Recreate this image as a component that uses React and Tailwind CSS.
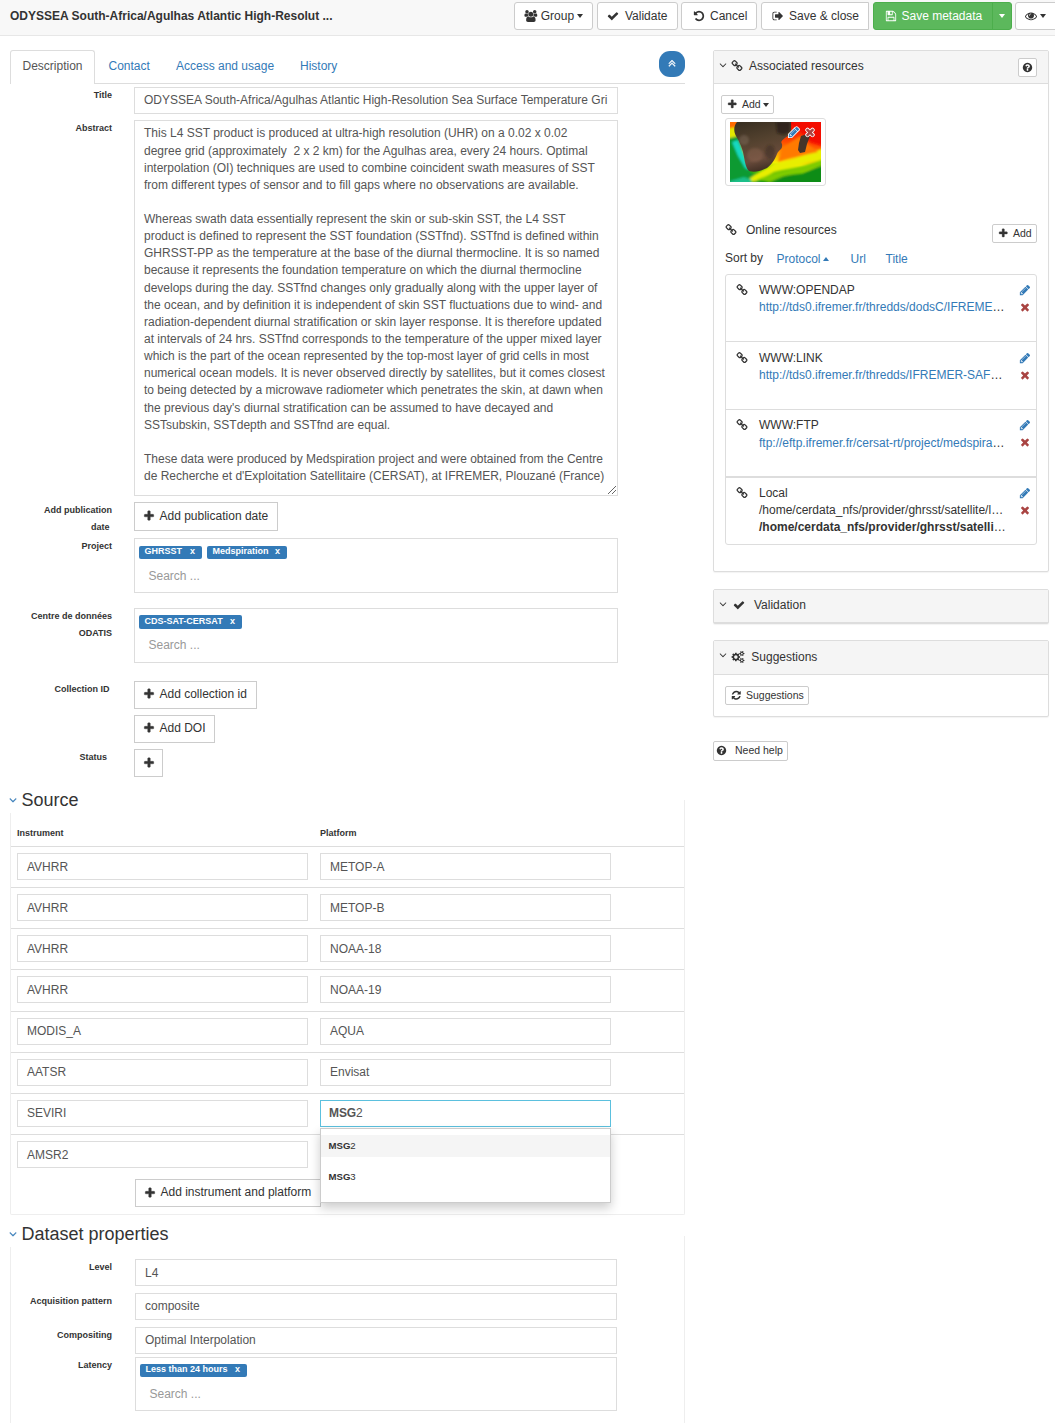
import React from "react";

const PATHS = {
  plus: "M1600 736v192q0 40-28 68t-68 28h-416v416q0 40-28 68t-68 28h-192q-40 0-68-28t-28-68v-416h-416q-40 0-68-28t-28-68v-192q0-40 28-68t68-28h416v-416q0-40 28-68t68-28h192q40 0 68 28t28 68v416h416q40 0 68 28t28 68z",
  check: "M1671 566q0 40-28 68l-724 724-136 136q-28 28-68 28t-68-28l-136-136-362-362q-28-28-28-68t28-68l136-136q28-28 68-28t68 28l294 295 656-657q28-28 68-28t68 28l136 136q28 28 28 68z",
  times: "M1490 1322q0 40-28 68l-136 136q-28 28-68 28t-68-28l-294-294-294 294q-28 28-68 28t-68-28l-136-136q-28-28-28-68t28-68l294-294-294-294q-28-28-28-68t28-68l136-136q28-28 68-28t68 28l294 294 294-294q28-28 68-28t68 28l136 136q28 28 28 68t-28 68l-294 294 294 294q28 28 28 68z",
  pencil: "M491 1536l91-91-235-235-91 91v107h128v128h107zm523-928q0-22-22-22-10 0-17 7l-542 542q-7 7-7 17 0 22 22 22 10 0 17-7l542-542q7-7 7-17zm-54-192l416 416-832 832h-416v-416zm683 96q0 53-37 90l-166 166-416-416 166-165q36-38 90-38 53 0 91 38l235 234q37 39 37 91z",
  up: "M1395 1184q0 13-10 23l-50 50q-10 10-23 10t-23-10l-393-393-393 393q-10 10-23 10t-23-10l-50-50q-10-10-10-23t10-23l466-466q10-10 23-10t23 10l466 466q10 10 10 23zm0-384q0 13-10 23l-50 50q-10 10-23 10t-23-10l-393-393-393 393q-10 10-23 10t-23-10l-50-50q-10-10-10-23t10-23l466-466q10-10 23-10t23 10l466 466q10 10 10 23z",
  down: "M1395 736q0 13-10 23l-466 466q-10 10-23 10t-23-10l-466-466q-10-10-10-23t10-23l50-50q10-10 23-10t23 10l393 393 393-393q10-10 23-10t23 10l50 50q10 10 10 23z",
  help: "M1024 1376v-192q0-14-9-23t-23-9h-192q-14 0-23 9t-9 23v192q0 14 9 23t23 9h192q14 0 23-9t9-23zm256-672q0-88-55.5-163t-138.500-116-170-41q-243 0-371 213-15 24 8 42l132 100q7 6 19 6 16 0 25-12 53-68 86-92 34-24 86-24 48 0 85.500 26t37.500 59q0 38-20 61t-68 45q-63 28-115.500 86.500t-52.500 125.500v36q0 14 9 23t23 9h192q14 0 23-9t9-23q0-19 21.500-49.500t54.500-49.500q32-18 49-28.500t46-35 44.500-48 28-60.500 12.500-81zm384 192q0 209-103 385.500t-279.500 279.500-385.500 103-385.500-103-279.500-279.500-103-385.500 103-385.500 279.500-279.500 385.500-103 385.500 103 279.500 279.500 103 385.500z",
  refresh: "M1639 1056q0 5-1 7-64 268-268 434.500t-478 166.500q-146 0-282.500-55t-243.500-157l-129 129q-19 19-45 19t-45-19-19-45v-448q0-26 19-45t45-19h448q26 0 45 19t19 45-19 45l-137 137q71 66 161 102t187 36q134 0 250-65t186-179q11-17 53-117 8-23 30-23h192q13 0 22.500 9.500t9.500 22.500zm25-800v448q0 26-19 45t-45 19h-448q-26 0-45-19t-19-45 19-45l138-138q-148-137-349-137-134 0-250 65t-186 179q-11 17-53 117-8 23-30 23h-199q-13 0-22.500-9.500t-9.500-22.500v-7q65-268 270-434.500t480-166.500q146 0 284 55.500t245 156.500l130-129q19-19 45-19t45 19 19 45z",
  undo: "M1664 896q0 156-61 298t-164 245-245 164-298 61q-172 0-327-72.500t-264-204.500q-7-10-6.500-22.500t8.500-20.500l137-138q10-9 25-9 16 2 23 12 73 95 179 147t225 52q104 0 198.500-40.500t163.500-109.500 109.500-163.500 40.500-198.500-40.500-198.500-109.500-163.500-163.500-109.500-198.500-40.500q-98 0-188 35.500t-160 101.500l137 138q31 30 14 69-17 40-59 40h-448q-26 0-45-19t-19-45v-448q0-42 40-59 39-17 69 14l130 129q107-101 244.500-156.500t284.500-55.500q156 0 298 61t245 164 164 245 61 298z",
  eye: "M1664 960q-152-236-381-353 61 104 61 225 0 185-131.500 316.500t-316.500 131.500-316.500-131.500-131.500-316.500q0-121 61-225-229 117-381 353 133 205 333.500 326.500t434.500 121.500 434.500-121.500 333.500-326.500zm-720-384q0-20-14-34t-34-14q-125 0-214.500 89.500t-89.500 214.500q0 20 14 34t34 14 34-14 14-34q0-86 61-147t147-61q20 0 34-14t14-34zm848 384q0 34-20 69-140 230-376.500 368.500t-499.500 138.500-499.500-139-376.500-368q-20-35-20-69t20-69q140-229 376.500-368t499.500-139 499.500 139 376.500 368q20 35 20 69z",
  save: "M512 1536h768v-384h-768v384zm896 0h128v-896q0-14-10-38.500t-20-34.500l-281-281q-10-10-34-20t-39-10v416q0 40-28 68t-68 28h-576q-40 0-68-28t-28-68v-416h-128v1280h128v-416q0-40 28-68t68-28h832q40 0 68 28t28 68v416zm-384-928v-320q0-13-9.500-22.500t-22.500-9.500h-192q-13 0-22.500 9.500t-9.500 22.500v320q0 13 9.500 22.500t22.500 9.500h192q13 0 22.500-9.500t9.500-22.500zm640 32v928q0 40-28 68t-68 28h-1344q-40 0-68-28t-28-68v-1344q0-40 28-68t68-28h928q40 0 88 20t76 48l280 280q28 28 48 76t20 88z",
  out: "M704 1440q0 4 1 20t.5 26.500-3 23.500-10 19.500-20.500 6.500h-320q-119 0-203.500-84.500t-84.500-203.500v-704q0-119 84.500-203.500t203.500-84.500h320q13 0 22.500 9.500t9.500 22.500q0 4 1 20t.5 26.500-3 23.500-10 19.500-20.500 6.500h-320q-66 0-113 47t-47 113v704q0 66 47 113t113 47h312l11.500 1 11.500 3 8 5.500 7 9 2 13.500zm928-544q0 26-19 45l-544 544q-19 19-45 19t-45-19-19-45v-288h-448q-26 0-45-19t-19-45v-384q0-26 19-45t45-19h448v-288q0-26 19-45t45-19 45 19l544 544q19 19 19 45z",
  link: "M1520 1216q0-40-28-68l-208-208q-28-28-68-28-42 0-72 32 3 3 19 18.500t21.500 21.500 15 19 13 25.500 3.500 27.500q0 40-28 68t-68 28q-15 0-27.500-3.500t-25.500-13-19-15-21.500-21.500-18.500-19q-33 31-33 73 0 40 28 68l206 207q27 27 68 27 40 0 68-26l147-146q28-28 28-67zm-703-705q0-40-28-68l-206-207q-28-28-68-28-39 0-68 27l-147 146q-28 28-28 67 0 40 28 68l208 208q27 27 68 27 42 0 72-31-3-3-19-18.500t-21.500-21.500-15-19-13-25.500-3.500-27.500q0-40 28-68t68-28q15 0 27.500 3.500t25.500 13 19 15 21.500 21.500 18.500 19q33-31 33-73zm895 705q0 120-85 203l-147 146q-83 83-203 83-121 0-204-85l-206-207q-83-83-83-203 0-123 88-209l-88-88q-86 88-208 88-120 0-204-84l-208-208q-84-84-84-204t85-203l147-146q83-83 203-83 121 0 204 85l206 207q83 83 83 203 0 123-88 209l88 88q86-88 208-88 120 0 204 84l208 208q84 84 84 204z",
  cogs: "M832 896q0-106-75-181t-181-75-181 75-75 181 75 181 181 75 181-75 75-181zm768 512q0-52-38-90t-90-38-90 38-38 90q0 53 37.500 90.500t90.500 37.500 90.500-37.500 37.500-90.500zm0-1024q0-52-38-90t-90-38-90 38-38 90q0 53 37.500 90.500t90.500 37.500 90.500-37.500 37.500-90.500zm-384 421v185q0 10-7 19.500t-16 10.500l-155 24q-11 35-32 76 34 48 90 115 7 11 7 20 0 12-7 19-23 30-82.500 89.500t-78.500 59.500q-11 0-21-7l-115-90q-37 19-77 31-11 108-23 155-7 24-30 24h-186q-11 0-20-7.500t-10-17.500l-23-153q-34-10-75-31l-118 89q-7 7-20 7-11 0-21-8-144-133-144-160 0-9 7-19 10-14 41-53t47-61q-23-44-35-82l-152-24q-10-1-17-9.500t-7-19.500v-185q0-10 7-19.500t16-10.500l155-24q11-35 32-76-34-48-90-115-7-11-7-20 0-12 7-20 22-30 82-89t79-59q11 0 21 7l115 90q34-18 77-32 11-108 23-154 7-24 30-24h186q11 0 20 7.500t10 17.500l23 153q34 10 75 31l118-89q8-7 20-7 11 0 21 8 144 133 144 160 0 8-7 19-12 16-42 54t-45 60q23 48 34 82l152 23q10 2 17 10.500t7 19.500zm640 533v140q0 16-149 31-12 27-30 52 51 113 51 138 0 4-4 7-122 71-124 71-8 0-46-47t-52-68q-20 2-30 2t-30-2q-14 21-52 68t-46 47q-2 0-124-71-4-3-4-7 0-25 51-138-18-25-30-52-149-15-149-31v-140q0-16 149-31 13-29 30-52-51-113-51-138 0-4 4-7 4-2 35-20t59-34 30-16q8 0 46 46.500t52 67.500q20-2 30-2t30 2q51-71 92-112l6-2q4 0 124 70 4 3 4 7 0 25-51 138 17 23 30 52 149 15 149 31zm0-1024v140q0 16-149 31-12 27-30 52 51 113 51 138 0 4-4 7-122 71-124 71-8 0-46-47t-52-68q-20 2-30 2t-30-2q-14 21-52 68t-46 47q-2 0-124-71-4-3-4-7 0-25 51-138-18-25-30-52-149-15-149-31v-140q0-16 149-31 13-29 30-52-51-113-51-138 0-4 4-7 4-2 35-20t59-34 30-16q8 0 46 46.500t52 67.500q20-2 30-2t30 2q51-71 92-112l6-2q4 0 124 70 4 3 4 7 0 25-51 138 17 23 30 52 149 15 149 31z",
  users: "M657 896q-162 5-265 128h-134q-82 0-138-40.500t-56-118.500q0-353 124-353 6 0 43.500 21t97.500 42.500 119 21.500q67 0 133-23-5 37-5 66 0 139 81 256zm1071 637q0 120-73 189.500t-194 69.500h-874q-121 0-194-69.500t-73-189.500q0-53 3.500-103.500t14-109 26.500-108.500 43-97.500 62-81 85.500-53.500 111.500-20q10 0 43 21.500t73 48 107 48 135 21.500 135-21.500 107-48 73-48 43-21.500q61 0 111.500 20t85.500 53.500 62 81 43 97.500 26.500 108.500 14 109 3.500 103.500zm-1024-1277q0 106-75 181t-181 75-181-75-75-181 75-181 181-75 181 75 75 181zm704 384q0 159-112.500 271.500t-271.500 112.500-271.500-112.500-112.500-271.500 112.500-271.500 271.500-112.500 271.500 112.500 112.500 271.500zm576 225q0 78-56 118.500t-138 40.500h-134q-103-123-265-128 81-117 81-256 0-29-5-66 66 23 133 23 59 0 119-21.500t97.500-42.500 43.500-21q124 0 124 353zm-128-609q0 106-75 181t-181 75-181-75-75-181 75-181 181-75 181 75 75 181z",
};

function Icon({ name, size = 12, wide = false, className = "", outline = false, bold = false }) {
  return (
    <svg
      viewBox={wide ? "0 0 1984 1792" : "0 0 1792 1792"}
      width={wide ? (size * 1984) / 1792 : size}
      height={size}
      fill="currentColor"
      stroke={outline ? "#fff" : bold ? "currentColor" : "none"}
      strokeWidth={outline ? 260 : bold ? 50 : 0}
      paintOrder="stroke"
      overflow="visible"
      className={"shrink-0 " + className}
    >
      <path d={PATHS[name]} />
    </svg>
  );
}

const Caret = ({ className = "" }) => (
  <span className={"h-0 w-0 shrink-0 border-x-[3.5px] border-t-[4px] border-x-transparent " + className} />
);

const toolBtn = "flex h-7 items-center rounded-[3px] border border-[#ccc] bg-white";

function TopBar() {
  return (
    <header className="flex h-9 items-start border-b border-[#e7e7e7] bg-[#f8f8f8] pl-[10px]">
      <h1 className="w-[504px] shrink-0 pt-[8px] font-bold">ODYSSEA South-Africa/Agulhas Atlantic High-Resolut ...</h1>
      <div className="flex shrink-0 items-start pt-[2px]">
        <button className={toolBtn + " mr-1 w-[79px] pl-[9px]"}>
          <Icon name="users" wide className="mr-[3.500px]" /><span className="pt-px">Group</span><Caret className="ml-[2.500px] border-t-[#333]" />
        </button>
        <button className={toolBtn + " mr-[3px] w-[81px] pl-[9px]"}>
          <Icon name="check" className="mr-[6px]" /><span className="pt-px">Validate</span>
        </button>
        <button className={toolBtn + " mr-1 w-[76px] pl-[11px]"}>
          <Icon name="undo" className="mr-[5px]" /><span className="pt-px">Cancel</span>
        </button>
        <button className={toolBtn + " mr-1 w-[108px] rounded-r-none pl-[10px]"}>
          <Icon name="out" className="mr-[5px]" /><span className="pt-px">Save &amp; close</span>
        </button>
        <div className="mr-[3px] flex h-7 w-[139px] rounded-[3px] border border-[#4cae4c] bg-[#5cb85c] text-white">
          <button className="flex w-[119px] items-center border-r border-[#4cae4c] pl-[11px]">
            <Icon name="save" className="mr-[4.500px]" /><span className="pt-px">Save metadata</span>
          </button>
          <button className="flex flex-1 items-center justify-center"><Caret className="border-t-white" /></button>
        </div>
        <button className={toolBtn + " w-[44px] pl-[9px]"}>
          <Icon name="eye" className="mr-[3px]" /><Caret className="border-t-[#333]" />
        </button>
      </div>
    </header>
  );
}

function Tabs() {
  const link = "pt-[8px] text-[#337ab7]";
  return (
    <nav className="flex h-[34px] border-b border-[#ddd]">
      <div className="h-[34px] w-[85px] rounded-t-[3px] border border-b-0 border-[#ddd] bg-white pl-[11.5px] pt-[7px] text-[#555]">Description</div>
      <div className={link + " ml-[13.5px] w-[67.500px]"}>Contact</div>
      <div className={link + " w-[124px]"}>Access and usage</div>
      <div className={link}>History</div>
      <button className="ml-auto mt-px flex h-[26px] w-[26px] items-center justify-center rounded-[11px] bg-[#337ab7] text-white">
        <Icon name="up" bold />
      </button>
    </nav>
  );
}

function Row({ label, labelClass = "", height, children }) {
  return (
    <div className={"flex items-start " + height}>
      <label className={"mr-[22px] w-[102px] shrink-0 whitespace-pre-line text-right text-[9px] font-bold " + labelClass}>{label}</label>
      {children}
    </div>
  );
}

function Input({ className = "", pad = "pt-[4px]", children }) {
  return (
    <div className={"h-[27px] shrink-0 overflow-hidden whitespace-nowrap border bg-white pl-[9px] text-[#555] " + pad + " " + className}>{children}</div>
  );
}

function AddButton({ className = "", children }) {
  return (
    <button className={"flex h-7 shrink-0 items-center border border-[#ccc] bg-white pl-[7.500px] " + className}>
      <Icon name="plus" bold className="mb-px mr-[5px]" />{children}
    </button>
  );
}

function TagBox({ tags, className = "", tagClass = "", searchClass = "pt-[8px]", height = "h-[55px] pt-[7px]" }) {
  return (
    <div className={"shrink-0 border border-[#ddd] pl-[4px] " + height + " " + className}>
      <div className="flex gap-[5px]">
        {tags.map(([text, width]) => (
          <span key={text} className={"flex h-[13px] shrink-0 items-center justify-between whitespace-nowrap rounded-[2px] bg-[#337ab7] pl-[5.500px] pr-[7px] text-[9px] font-bold text-white " + width + " " + (tagClass || "pb-[2px]")}>
            <span>{text}</span><span>x</span>
          </span>
        ))}
      </div>
      <div className={"pl-[9.500px] text-[#999] " + searchClass}>Search ...</div>
    </div>
  );
}

const ABSTRACT = `This L4 SST product is produced at ultra-high resolution (UHR) on a 0.02 x 0.02
degree grid (approximately  2 x 2 km) for the Agulhas area, every 24 hours. Optimal
interpolation (OI) techniques are used to combine coincident swath measures of SST
from different types of sensor and to fill gaps where no observations are available.

Whereas swath data essentially represent the skin or sub-skin SST, the L4 SST
product is defined to represent the SST foundation (SSTfnd). SSTfnd is defined within
GHRSST-PP as the temperature at the base of the diurnal thermocline. It is so named
because it represents the foundation temperature on which the diurnal thermocline
develops during the day. SSTfnd changes only gradually along with the upper layer of
the ocean, and by definition it is independent of skin SST fluctuations due to wind- and
radiation-dependent diurnal stratification or skin layer response. It is therefore updated
at intervals of 24 hrs. SSTfnd corresponds to the temperature of the upper mixed layer
which is the part of the ocean represented by the top-most layer of grid cells in most
numerical ocean models. It is never observed directly by satellites, but it comes closest
to being detected by a microwave radiometer which penetrates the skin, at dawn when
the previous day's diurnal stratification can be assumed to have decayed and
SSTsubskin, SSTdepth and SSTfnd are equal.

These data were produced by Medspiration project and were obtained from the Centre
de Recherche et d'Exploitation Satellitaire (CERSAT), at IFREMER, Plouzané (France)`;

const SOURCES = [
  ["AVHRR", "METOP-A"],
  ["AVHRR", "METOP-B"],
  ["AVHRR", "NOAA-18"],
  ["AVHRR", "NOAA-19"],
  ["MODIS_A", "AQUA"],
  ["AATSR", "Envisat"],
  ["SEVIRI", "MSG2"],
  ["AMSR2", ""],
];

function Legend({ children, className = "-mt-[12px] h-[25px]" }) {
  return (
    <h2 className={"-ml-[4px] flex w-[300px] items-center bg-white text-[18px] leading-[25px] " + className}>
      <Icon name="down" bold className="mb-[2px] mr-[2.500px] text-[#337ab7]" />{children}
    </h2>
  );
}

function Suggest() {
  return (
    <div className="absolute left-0 top-[28px] z-10 h-[75px] w-[291px] border border-[#ccc] bg-white pt-[6px] text-[9.600px] text-[#333] shadow-[0_5px_10px_rgba(0,0,0,0.2)]">
      <div className="h-[22px] bg-[#f5f5f5] pl-[7.500px] pt-[2.500px]"><b>MSG</b>2</div>
      <div className="pl-[7.500px] pt-[11.500px]"><b>MSG</b>3</div>
    </div>
  );
}

function Source() {
  return (
    <section className="flow-root h-[415px] w-[675px] rounded-b-[2px] border border-t-0 border-[#eee]">
      <Legend>Source</Legend>
      <div className="flex h-[33px] pl-[6px] pt-[11.500px] text-[9px] font-bold">
        <span className="w-[303px]">Instrument</span>
        <span>Platform</span>
      </div>
      {SOURCES.map(([inst, plat], i) => {
        const pad = i === SOURCES.length - 1 ? "pt-[5px]" : "pt-[4.600px]";
        return (
          <div key={i} className="flex h-[41.140px] gap-3 border-t border-[#ddd] pl-[6px] pt-[6px]">
            <Input pad={pad} className="w-[291px] border-[#ddd]">{inst}</Input>
            {inst === "SEVIRI" ? (
              <div className="relative">
                <Input pad={pad} className="w-[291px] border-[#5bc0de]"><b className="-ml-px tracking-[-0.100px]">MSG</b>2</Input>
                <Suggest />
              </div>
            ) : plat ? (
              <Input pad={pad} className="w-[291px] border-[#ddd]">{plat}</Input>
            ) : null}
          </div>
        );
      })}
      <AddButton className="ml-[124px] mt-[4px] w-[186px]">Add instrument and platform</AddButton>
    </section>
  );
}

function Dataset() {
  return (
    <section className="mt-[21px] flow-root h-[187px] w-[675px] border-x border-[#eee]">
      <Legend className="-mt-[14px] h-[25px]">Dataset properties</Legend>
      <div className="-ml-px w-[608px] pt-[12px]">
        <Row label="Level" height="h-[34px]"><Input pad="pt-[5px]" className="ml-px w-[482px] border-[#ddd]">L4</Input></Row>
        <Row label="Acquisition pattern" height="h-[34px]"><Input className="ml-px w-[482px] border-[#ddd]">composite</Input></Row>
        <Row label="Compositing" height="h-[30px]"><Input className="ml-px w-[482px] border-[#ddd]">Optimal Interpolation</Input></Row>
        <Row label="Latency" height="h-[55px]">
          <TagBox height="h-[54px] pt-[6px]" tagClass="pb-px" searchClass="pt-[9px]" className="ml-px w-[482px]" tags={[["Less than 24 hours", "w-[107px]"]]} />
        </Row>
      </div>
    </section>
  );
}

function Editor() {
  return (
    <main className="w-[675px] shrink-0">
      <Tabs />
      <div className="pt-[3px]">
        <Row label="Title" height="h-[33px]">
          <Input className="w-[484px] border-[#ddd]">ODYSSEA South-Africa/Agulhas Atlantic High-Resolution Sea Surface Temperature Gri</Input>
        </Row>
        <Row label="Abstract" height="h-[382px]">
          <div className="relative h-[376px] w-[484px] whitespace-pre border border-[#ddd] pl-[9px] pt-[4.360px] leading-[17.140px] text-[#555]">
            {ABSTRACT}
            <svg viewBox="0 0 8 8" className="absolute bottom-px right-px h-2 w-2" stroke="#555" strokeWidth="0.9">
              <path d="M0 8L8 0M4 8L8 4" />
            </svg>
          </div>
        </Row>
        <Row label={"Add publication\ndate\u00a0"} height="h-[36px]">
          <AddButton className="h-[29px] w-[144px]">Add publication date</AddButton>
        </Row>
        <Row label="Project" height="h-[70px]">
          <TagBox className="w-[484px]" searchClass="pt-[9px]" tags={[["GHRSST", "w-[63px]"], ["Medspiration", "w-[80px]"]]} />
        </Row>
        <Row label={"Centre de données\nODATIS"} height="h-[73px]">
          <TagBox className="w-[484px]" tagClass="-mt-px h-[14px] pb-px" tags={[["CDS-SAT-CERSAT", "w-[103px]"]]} />
        </Row>
        <Row label={"Collection ID\u00a0"} height="h-[34px]"><AddButton className="w-[123px] pb-px">Add collection id</AddButton></Row>
        <Row label="" height="h-[34px]"><AddButton className="w-[81px] pb-px">Add DOI</AddButton></Row>
        <Row label={"Status\u00a0\u00a0"} height="h-[51px]"><AddButton className="w-[29px]" /></Row>
      </div>
      <Source />
      <Dataset />
    </main>
  );
}

const smallBtn = "flex shrink-0 items-center rounded-[2px] border border-[#ccc] bg-white text-[10.500px]";

function Thumbnail() {
  return (
    <div className="ml-[11px] mt-[4px] flex h-[68px] w-[101px] items-start rounded-[3px] border border-[#ddd] pl-[4px] pt-[3px]">
      <div className="relative h-[60px] w-[91px]">
        <svg viewBox="0 0 91 60" className="h-[60px] w-[91px]" overflow="hidden">
          <defs>
            <linearGradient id="sea" x1="0.62" y1="0" x2="0.45" y2="1">
              <stop offset="0" stopColor="#f50800" />
              <stop offset="0.32" stopColor="#ff4a00" />
              <stop offset="0.52" stopColor="#ff9c00" />
              <stop offset="0.68" stopColor="#f4f000" />
              <stop offset="0.8" stopColor="#5fc400" />
              <stop offset="1" stopColor="#078a18" />
            </linearGradient>
            <linearGradient id="land" x1="0.2" y1="0" x2="0.5" y2="1">
              <stop offset="0" stopColor="#3a3022" />
              <stop offset="0.4" stopColor="#54422f" />
              <stop offset="0.75" stopColor="#6a4c3c" />
              <stop offset="1" stopColor="#3c2c22" />
            </linearGradient>
            <filter id="soft" x="-20%" y="-20%" width="140%" height="140%"><feGaussianBlur stdDeviation="1.3" /></filter>
          </defs>
          <rect width="91" height="60" fill="url(#sea)" />
          <g filter="url(#soft)">
            <path d="M-4 14L8 10L15 40L22 52L40 50L26 64H-4z" fill="#0a9a30" />
            <path d="M-4 -4H10L7 8L-4 8z" fill="#ff6a00" />
            <path d="M-4 7L7 5L8 14L-4 17z" fill="#e3e800" />
            <path d="M2 20L8 18L14 32L19 48L15 46L8 34z" fill="#18d8c0" />
            <path d="M12 62L26 52L44 42L60 38L80 31L94 26V38L76 41L60 46L44 50L30 58z" fill="#e8ee00" />
            <path d="M36 61L50 55L60 53L72 52L94 42V64H36z" fill="#0b8c14" />
            <path d="M26 58L44 51L62 47L76 43L94 37V43L74 50L54 54L40 60z" fill="#7ecb00" />
            <path d="M0 59L14 55L22 58L20 62H0z" fill="#1bbf8a" />
            <path d="M60 -2H93V24L80 20L70 8z" fill="#f30800" />
            <path d="M52 26L70 14L80 24L88 30L60 36L48 40z" fill="#ff7a00" />
          </g>
          <path d="M7 0C3 5 4 10 6 14C10 20 13 28 14 35C15 41 16 46 19 49C26 51 32 48 37 46C43 41 45 37 47 32C49 27 53 28 52 22C49 18 57 16 61 11V0z" fill="url(#land)" />
          <path d="M77 12L71 14L69 21L68 28L70 31L75 30L77 22L80 14z" fill="#44352a" />
          <g filter="url(#soft)">
            <path d="M46 0H60V10L54 13L47 11z" fill="#1c190f" opacity="0.6" />
            <ellipse cx="14" cy="18" rx="5" ry="5" fill="#9a8578" opacity="0.3" />
            <ellipse cx="25" cy="33" rx="8" ry="7" fill="#a0745e" opacity="0.3" />
            <ellipse cx="40" cy="30" rx="5" ry="7" fill="#3a2b1e" opacity="0.5" />
          </g>
        </svg>
        <Icon name="pencil" outline className="absolute left-[58px] top-[4px] text-[#337ab7]" />
        <Icon name="times" outline className="absolute left-[74px] top-[4px] text-[#a94442]" />
      </div>
    </div>
  );
}

const LINKS = [
  { type: "WWW:OPENDAP", url: "http://tds0.ifremer.fr/thredds/dodsC/IFREME", h: "h-[66px] pt-[7px]" },
  { type: "WWW:LINK", url: "http://tds0.ifremer.fr/thredds/IFREMER-SAF", h: "h-[68px] pt-[8px]" },
  { type: "WWW:FTP", url: "ftp://eftp.ifremer.fr/cersat-rt/project/medspira", h: "h-[67px] pt-[7.400px]" },
  { type: "Local", path: "/home/cerdata_nfs/provider/ghrsst/satellite/l", bold: "/home/cerdata_nfs/provider/ghrsst/satelli", h: "h-[67px] pt-[7px]" },
];

const panel = "rounded-[2px] border border-[#ddd] bg-white shadow-[0_1px_1px_rgba(0,0,0,0.05)]";
const panelHead = "flex items-start bg-[#f5f5f5] pl-[3px]";

function LinkItem({ item, first }) {
  return (
    <li className={"flex items-start pl-[10px] " + item.h + (first ? "" : " border-t border-[#ddd]")}>
      <Icon name="link" className="mr-[11px] mt-[2px]" />
      <div className="w-[256px] whitespace-nowrap">
        <p>{item.type}</p>
        {item.url && <p><span className="text-[#337ab7]">{item.url}</span>…</p>}
        {item.path && <p>{item.path}…</p>}
        {item.bold && <p><b>{item.bold}</b>…</p>}
      </div>
      <div className="flex w-[20px] flex-col items-center gap-[5px] pt-[2px]">
        <Icon name="pencil" className="text-[#337ab7]" />
        <Icon name="times" className="text-[#a94442]" />
      </div>
    </li>
  );
}

function Sidebar() {
  return (
    <aside className="w-[336px] shrink-0">
      <section className={panel + " h-[522px]"}>
        <div className={panelHead + " h-[33px] border-b border-[#ddd]"}>
          <Icon name="down" className="mt-[8px]" />
          <Icon name="link" className="ml-[2px] mr-[6px] mt-[9px]" />
          <span className="pt-[6.500px]">Associated resources</span>
          <button className={smallBtn + " ml-auto mr-[11px] mt-[7px] h-[19px] w-[19px] justify-center"}><Icon name="help" size={11} /></button>
        </div>
        <div className="pl-[7px] pt-[11px]">
          <button className={smallBtn + " h-[19px] w-[53px] pl-[5px]"}>
            <Icon name="plus" bold size={10.5} className="mr-[4.500px]" />Add<Caret className="ml-[2px] border-x-[3px] border-t-[3px] border-t-[#333]" />
          </button>
        </div>
        <Thumbnail />
        <div className="flex h-[65px] items-start pl-[11px] pt-[38px]">
          <Icon name="link" className="mr-[9px]" />
          <span className="-mt-[2px]">Online resources</span>
          <button className={smallBtn + " ml-auto mr-[11px] h-[19px] w-[45px] pl-[5px]"}>
            <Icon name="plus" bold size={10.5} className="mr-[4.500px]" />Add
          </button>
        </div>
        <div className="flex h-[23px] pl-[11px] text-[#337ab7]">
          <span className="-mt-px w-[51.500px] text-[#333]">Sort by</span>
          <span className="flex w-[74px] items-start">Protocol<span className="ml-[2.500px] mt-[6px] h-0 w-0 border-x-[3.500px] border-b-[4px] border-x-transparent border-b-[#337ab7]" /></span>
          <span className="w-[35px]">Url</span>
          <span>Title</span>
        </div>
        <ul className="ml-[11px] w-[312px] rounded-[3px] border border-[#ddd]">
          {LINKS.slice(0, 3).map((item, i) => <LinkItem key={item.type} item={item} first={i === 0} />)}
          <li className="border-t border-[#ddd]"><ul><LinkItem item={LINKS[3]} /></ul></li>
        </ul>
      </section>

      <section className={panel + " mt-[17px] h-[35px]"}>
        <div className={panelHead + " h-[33px] border-b border-[#ddd]"}>
          <Icon name="down" className="mt-[8px]" />
          <Icon name="check" className="ml-[4px] mr-[9px] mt-[9px]" />
          <span className="pt-[6.500px]">Validation</span>
        </div>
      </section>

      <section className={panel + " mt-[16px] h-[77px]"}>
        <div className={panelHead + " h-[34px] border-b border-[#ddd]"}>
          <Icon name="down" className="mt-[8px]" />
          <Icon name="cogs" wide className="ml-[2.500px] mr-[6.500px] mt-[10px]" />
          <span className="pt-[7.500px]">Suggestions</span>
        </div>
        <button className={smallBtn + " ml-[11px] mt-[11px] h-[19px] w-[84px] pl-[5px]"}>
          <Icon name="refresh" size={10.5} className="mr-[4.500px]" />Suggestions
        </button>
      </section>

      <button className={smallBtn + " mt-[24px] h-[20px] w-[75px] pl-[2px]"}>
        <Icon name="help" size={11} className="mb-px mr-[8px]" />Need help
      </button>
    </aside>
  );
}

export default function App() {
  return (
    <div className="h-[1423px] w-[1055px] overflow-hidden bg-white font-['Liberation_Sans',Arial,sans-serif] text-[12px] leading-[17.140px] text-[#333]">
      <TopBar />
      <div className="flex gap-7 pl-[10px] pt-[14px]">
        <Editor />
        <Sidebar />
      </div>
    </div>
  );
}
